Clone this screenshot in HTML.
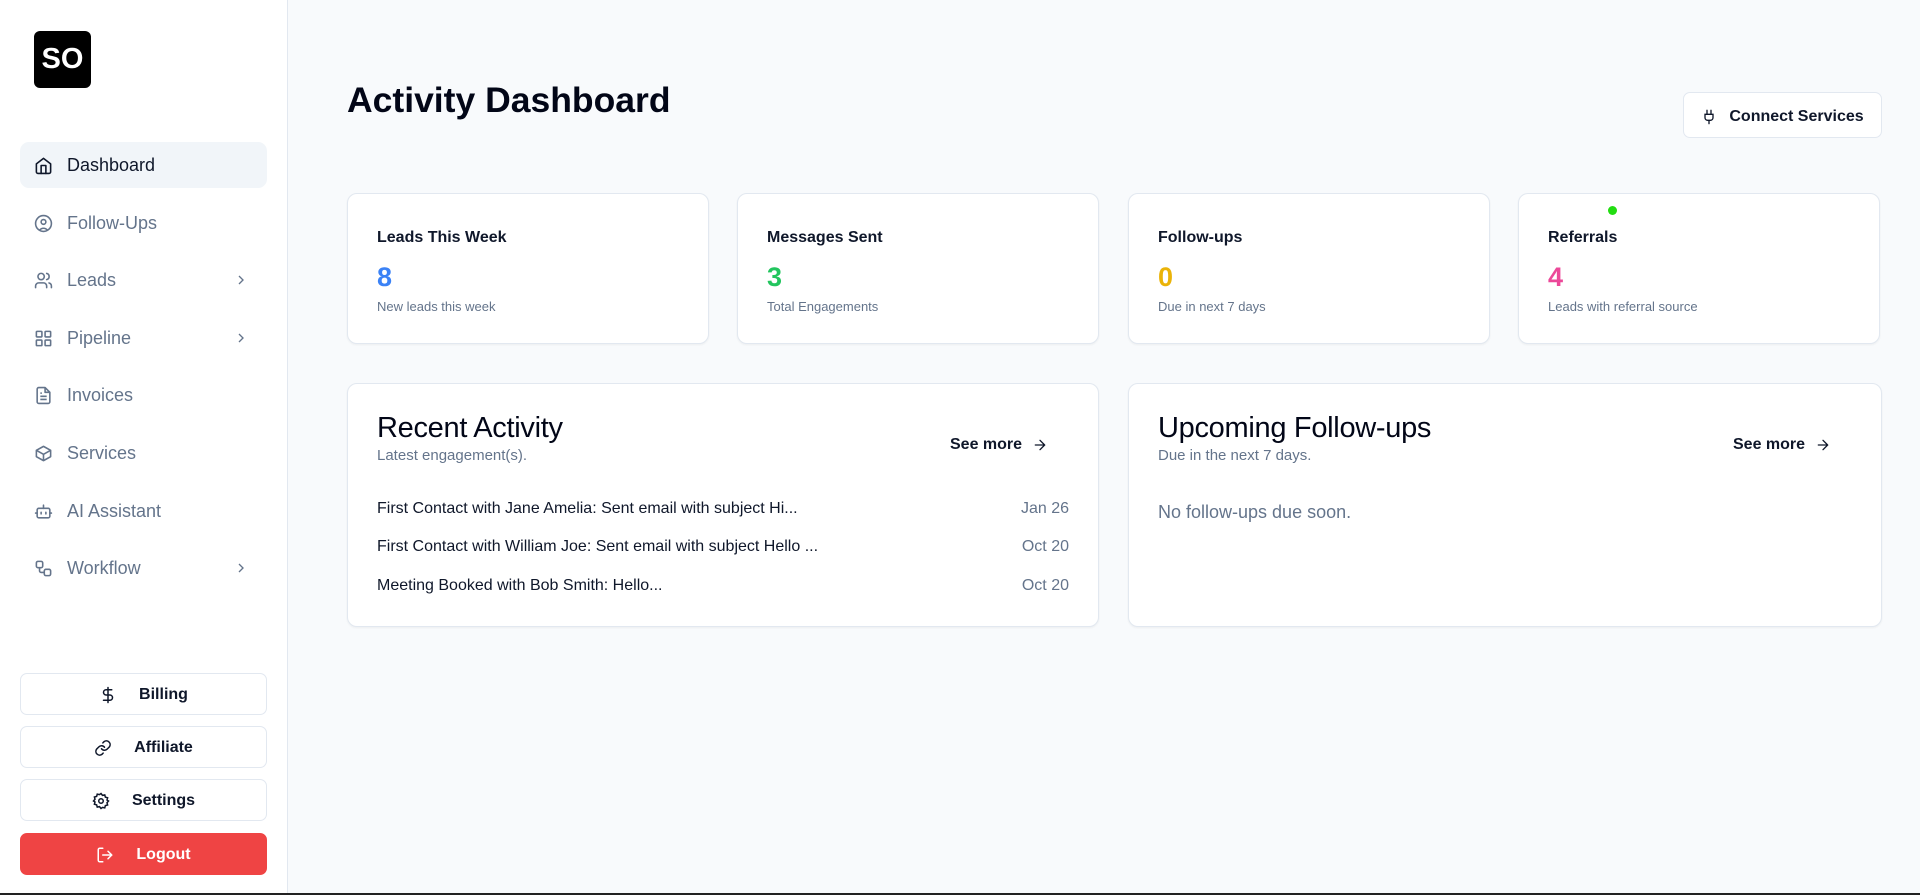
<!DOCTYPE html>
<html><head><meta charset="utf-8"><style>
*{box-sizing:border-box;margin:0;padding:0}
body{width:1920px;height:895px;overflow:hidden;background:#f8fafc;font-family:"Liberation Sans",sans-serif;color:#0f172a;position:relative}
.side{position:absolute;left:0;top:0;width:288px;height:893px;background:#fff;border-right:1px solid #e2e8f0}
.logo{position:absolute;left:34px;top:31px;width:57px;height:57px;background:#000;border-radius:6px;color:#fff;font-weight:bold;font-size:29px;display:flex;align-items:center;justify-content:center}
.nav{position:absolute;left:20px;width:247px;height:46px;border-radius:9px;display:flex;align-items:center;color:#64748b;font-size:18px}
.nav.act{background:#f1f5f9;color:#0f172a}
.nav svg{position:absolute;left:14px;width:19px;height:19px}
.nav span{position:absolute;left:47px}
.nav .chev{left:auto;right:18px;width:16px;height:16px}
.btn{position:absolute;left:20px;width:247px;height:42px;border:1px solid #e2e8f0;border-radius:7px;background:#fff;display:flex;align-items:center;justify-content:center;font-weight:bold;font-size:16px;color:#0f172a;gap:22px;padding-top:2px}
.btn svg{width:18px;height:18px}
.btn.red{background:#ef4444;border-color:#ef4444;color:#fff}
.title{position:absolute;left:347px;top:80px;font-size:35.5px;font-weight:bold;color:#020617}
.cs{position:absolute;left:1683px;top:92px;width:199px;height:46px;border:1px solid #e2e8f0;border-radius:7px;background:#fff;display:flex;align-items:center;justify-content:center;gap:12px;font-weight:bold;font-size:16px;padding-top:3px}
.card{position:absolute;background:#fff;border:1px solid #e2e8f0;border-radius:10px;box-shadow:0 1px 2px rgba(0,0,0,.05)}
.stat{top:193px;width:362px;height:151px}
.stat .l{position:absolute;left:29px;top:35px;font-size:16px;font-weight:bold;color:#0f172a}
.stat .n{position:absolute;left:29px;top:68px;font-size:27px;font-weight:bold}
.stat .s{position:absolute;left:29px;top:105px;font-size:13px;color:#64748b}
.big{top:383px;height:244px;width:752px}
.big h2{position:absolute;left:29px;top:28px;font-size:29px;font-weight:normal;color:#020617;letter-spacing:-0.3px}
.big .sub{position:absolute;left:29px;top:63px;font-size:15px;color:#64748b}
.big .more{position:absolute;left:602px;top:52px;font-size:16px;font-weight:bold;display:flex;align-items:center;gap:10px}
.row{position:absolute;left:29px;right:29px;font-size:16px;display:flex;justify-content:space-between;color:#0f172a}
.row b{font-weight:normal;color:#64748b}
</style></head><body>
<div class="side">
<div class="logo">SO</div>
<div class="nav act" style="top:142px"><svg viewBox="0 0 24 24" fill="none" stroke="#0f172a" stroke-width="2" stroke-linecap="round" stroke-linejoin="round"><path d="M3 10l9-7 9 7v10a2 2 0 0 1-2 2H5a2 2 0 0 1-2-2z"/><path d="M9 22V12h6v10"/></svg><span>Dashboard</span></div>
<div class="nav" style="top:200px"><svg viewBox="0 0 24 24" fill="none" stroke="#64748b" stroke-width="2"><circle cx="12" cy="12" r="10"/><circle cx="12" cy="10" r="3"/><path d="M7 20.7a6 6 0 0 1 10 0"/></svg><span>Follow-Ups</span></div>
<div class="nav" style="top:257px"><svg viewBox="0 0 24 24" fill="none" stroke="#64748b" stroke-width="2" stroke-linecap="round"><path d="M16 21v-2a4 4 0 0 0-4-4H6a4 4 0 0 0-4 4v2"/><circle cx="9" cy="7" r="4"/><path d="M22 21v-2a4 4 0 0 0-3-3.9M16 3.1a4 4 0 0 1 0 7.8"/></svg><span>Leads</span><svg class="chev" viewBox="0 0 24 24" fill="none" stroke="#64748b" stroke-width="2"><path d="M9 6l6 6-6 6"/></svg></div>
<div class="nav" style="top:315px"><svg viewBox="0 0 24 24" fill="none" stroke="#64748b" stroke-width="2"><rect x="3" y="3" width="7" height="7" rx="1"/><rect x="14" y="3" width="7" height="7" rx="1"/><rect x="3" y="14" width="7" height="7" rx="1"/><rect x="14" y="14" width="7" height="7" rx="1"/></svg><span>Pipeline</span><svg class="chev" viewBox="0 0 24 24" fill="none" stroke="#64748b" stroke-width="2"><path d="M9 6l6 6-6 6"/></svg></div>
<div class="nav" style="top:372px"><svg viewBox="0 0 24 24" fill="none" stroke="#64748b" stroke-width="2" stroke-linejoin="round"><path d="M14 2H6a2 2 0 0 0-2 2v16a2 2 0 0 0 2 2h12a2 2 0 0 0 2-2V8z"/><path d="M14 2v6h6M8 13h8M8 17h8M8 9h2"/></svg><span>Invoices</span></div>
<div class="nav" style="top:430px"><svg viewBox="0 0 24 24" fill="none" stroke="#64748b" stroke-width="2" stroke-linejoin="round"><path d="M21 8l-9-5-9 5v8l9 5 9-5z"/><path d="M3 8l9 5 9-5M12 13v8"/></svg><span>Services</span></div>
<div class="nav" style="top:488px"><svg viewBox="0 0 24 24" fill="none" stroke="#64748b" stroke-width="2" stroke-linecap="round"><rect x="4" y="8" width="16" height="12" rx="2"/><path d="M12 8V4M2 14h2M20 14h2M9 13v2M15 13v2"/></svg><span>AI Assistant</span></div>
<div class="nav" style="top:545px"><svg viewBox="0 0 24 24" fill="none" stroke="#64748b" stroke-width="2"><rect x="3" y="3" width="8" height="8" rx="2"/><rect x="13" y="13" width="8" height="8" rx="2"/><path d="M7 11v4a2 2 0 0 0 2 2h4"/></svg><span>Workflow</span><svg class="chev" viewBox="0 0 24 24" fill="none" stroke="#64748b" stroke-width="2"><path d="M9 6l6 6-6 6"/></svg></div>
<div class="btn" style="top:673px"><svg viewBox="0 0 24 24" fill="none" stroke="#0f172a" stroke-width="2" stroke-linecap="round"><path d="M12 2v20M17 5H9.5a3.5 3.5 0 0 0 0 7h5a3.5 3.5 0 0 1 0 7H6"/></svg>Billing</div>
<div class="btn" style="top:726px"><svg viewBox="0 0 24 24" fill="none" stroke="#0f172a" stroke-width="2" stroke-linecap="round"><path d="M10 13a5 5 0 0 0 7.5.5l3-3a5 5 0 0 0-7-7l-1.7 1.7"/><path d="M14 11a5 5 0 0 0-7.5-.5l-3 3a5 5 0 0 0 7 7l1.7-1.7"/></svg>Affiliate</div>
<div class="btn" style="top:779px"><svg viewBox="0 0 24 24" fill="none" stroke="#0f172a" stroke-width="2"><circle cx="12" cy="12" r="3"/><path d="M12 2l2 2.5 3-.7.8 3 3 .9-.8 3L22 12l-2 2.3.8 3-3 .9-.8 3-3-.7L12 22l-2-2.5-3 .7-.8-3-3-.9.8-3L2 12l2-2.3-.8-3 3-.9.8-3 3 .7z"/></svg>Settings</div>
<div class="btn red" style="top:833px"><svg viewBox="0 0 24 24" fill="none" stroke="#fff" stroke-width="2" stroke-linecap="round"><path d="M9 21H5a2 2 0 0 1-2-2V5a2 2 0 0 1 2-2h4M16 17l5-5-5-5M21 12H9"/></svg>Logout</div>
</div>
<div style="position:absolute;left:0;top:893px;width:1920px;height:2px;background:#222"></div>
<div class="title">Activity Dashboard</div>
<div class="cs"><svg width="16" height="18" viewBox="0 0 24 24" fill="none" stroke="#0f172a" stroke-width="2" stroke-linecap="round"><path d="M12 22v-5M9 8V2M15 8V2M18 8v5a4 4 0 0 1-4 4h-4a4 4 0 0 1-4-4V8z"/></svg>Connect Services</div>
<div class="card stat" style="left:347px"><div class="l">Leads This Week</div><div class="n" style="color:#3b82f6">8</div><div class="s">New leads this week</div></div>
<div class="card stat" style="left:737px"><div class="l">Messages Sent</div><div class="n" style="color:#22c55e">3</div><div class="s">Total Engagements</div></div>
<div class="card stat" style="left:1128px"><div class="l">Follow-ups</div><div class="n" style="color:#eab308">0</div><div class="s">Due in next 7 days</div></div>
<div class="card stat" style="left:1518px"><div style="position:absolute;left:89px;top:12px;width:9px;height:9px;border-radius:50%;background:#22dd11"></div><div class="l">Referrals</div><div class="n" style="color:#ec4899">4</div><div class="s">Leads with referral source</div></div>
<div class="card big" style="left:347px"><h2>Recent Activity</h2><div class="sub">Latest engagement(s).</div><div class="more">See more <svg width="16" height="16" viewBox="0 0 24 24" fill="none" stroke="#0f172a" stroke-width="2" stroke-linecap="round"><path d="M5 12h14M12 5l7 7-7 7"/></svg></div>
<div class="row" style="top:116px"><span>First Contact with Jane Amelia: Sent email with subject Hi...</span><b>Jan 26</b></div>
<div class="row" style="top:154px"><span>First Contact with William Joe: Sent email with subject Hello ...</span><b>Oct 20</b></div>
<div class="row" style="top:193px"><span>Meeting Booked with Bob Smith: Hello...</span><b>Oct 20</b></div>
</div>
<div class="card big" style="left:1128px;width:754px"><h2>Upcoming Follow-ups</h2><div class="sub">Due in the next 7 days.</div><div class="more" style="left:604px">See more <svg width="16" height="16" viewBox="0 0 24 24" fill="none" stroke="#0f172a" stroke-width="2" stroke-linecap="round"><path d="M5 12h14M12 5l7 7-7 7"/></svg></div>
<div style="position:absolute;left:29px;top:118px;font-size:18px;color:#64748b">No follow-ups due soon.</div></div>
</body></html>
